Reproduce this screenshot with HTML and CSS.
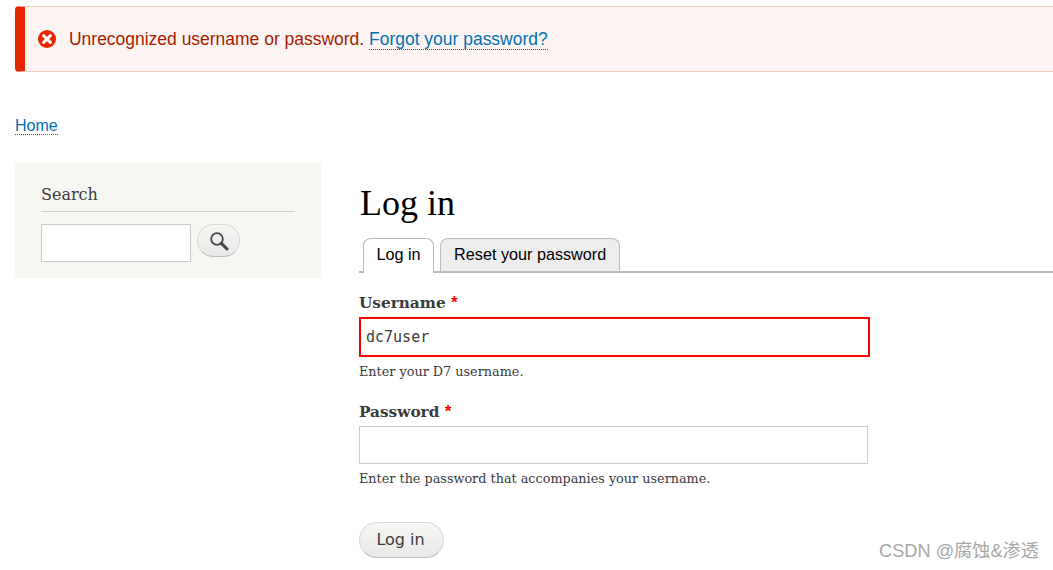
FILE: index.html
```html
<!DOCTYPE html>
<html lang="en">
<head>
  <meta charset="UTF-8" />
  <title>Log in</title>
  <link rel="stylesheet" href="styles.css">
</head>
<body>
<div class="message">
  <svg class="message-icon" viewBox="0 0 18 18" width="18" height="18">
    <circle cx="9" cy="9" r="9" fill="#e62600"/>
    <path d="M5.6 5.6 12.4 12.4M12.4 5.6 5.6 12.4" stroke="#fff" stroke-width="3" stroke-linecap="round"/>
  </svg>
  <span>Unrecognized username or password. <a href="#">Forgot your password?</a></span>
</div>

<div class="breadcrumb"><a href="#">Home</a></div>

<div class="layout">
  <aside class="sidebar">
    <h2>Search</h2>
    <div class="search-row">
      <input class="search-input" type="text">
      <button class="search-btn" type="button" aria-label="Search">
        <svg viewBox="0 0 20 20" width="20" height="20">
          <circle cx="8" cy="8" r="5.8" fill="none" stroke="#444" stroke-width="1.8"/>
          <path d="M12.4 12.4 18 18" stroke="#444" stroke-width="3" stroke-linecap="round"/>
        </svg>
      </button>
    </div>
  </aside>

  <main class="main">
    <h1>Log in</h1>
    <div class="tabs">
      <a class="tab active" href="#">Log in</a>
      <a class="tab" href="#">Reset your password</a>
    </div>
    <form class="login-form">
      <label>Username <span class="req">*</span></label>
      <input class="field field-error" type="text" value="dc7user">
      <p class="hint">Enter your D7 username.</p>

      <label class="second">Password <span class="req">*</span></label>
      <input class="field" type="password">
      <p class="hint">Enter the password that accompanies your username.</p>

      <button class="submit" type="button">Log in</button>
    </form>
  </main>
</div>

<div class="watermark">CSDN @腐蚀&amp;渗透</div>
</body>
</html>
```

FILE: styles.css
```css
html, body {
  margin: 0;
  padding: 0;
  height: 100%;
  overflow: hidden;
  background: #fff;
  color: #3b3b3b;
  font-family: "DejaVu Serif", serif;
}

a {
  color: #0071b3;
  text-decoration: none;
  border-bottom: 1px dotted #0071b3;
}

.message {
  box-sizing: border-box;
  display: flex;
  align-items: center;
  gap: 13px;
  height: 66px;
  margin: 6px -20px 0 15px;
  padding-left: 13px;
  background: #fcf4f2;
  border: 1px solid #f9c9bf;
  border-left: 10px solid #e62600;
  border-radius: 4px 0 0 4px;
  color: #a51b00;
  font-family: "Liberation Sans", Arial, sans-serif;
  font-size: 17.48px;
}

.message-icon {
  flex: none;
}

.breadcrumb {
  margin: 44px 0 0 15px;
  font-family: "Liberation Sans", Arial, sans-serif;
  font-size: 16px;
  line-height: 19px;
}

.layout {
  display: flex;
  align-items: flex-start;
  margin: 28px 0 0 15px;
}

.sidebar {
  box-sizing: border-box;
  flex: none;
  width: 306px;
  height: 115px;
  padding: 21px 26px 0;
  background: #f6f6f2;
}

.sidebar h2 {
  margin: 0;
  padding-bottom: 5px;
  border-bottom: 1px solid #d0d0cc;
  font-family: "DejaVu Serif", serif;
  font-size: 16px;
  line-height: 22px;
  font-weight: normal;
}

.search-row {
  display: flex;
  align-items: flex-start;
  gap: 6px;
  margin-top: 12px;
}

.search-input {
  box-sizing: border-box;
  width: 150px;
  height: 38px;
  padding: 0 6px;
  background: #fff;
  border: 1px solid #ccc;
}

.search-btn {
  display: flex;
  align-items: center;
  justify-content: center;
  width: 43px;
  height: 33px;
  padding: 0;
  border: 1px solid #d8d8d8;
  border-bottom-color: #bbb;
  border-radius: 17px;
  background: linear-gradient(#f6f6f3, #e8e8e8);
}

.main {
  flex: 1;
  margin-left: 38px;
}

.main h1 {
  margin: 20px 0 0 1px;
  color: #000;
  font-family: "Liberation Serif", serif;
  font-size: 36px;
  line-height: 40px;
  font-weight: normal;
}

.tabs {
  display: flex;
  gap: 6px;
  margin-top: 15px;
  padding-left: 4px;
  border-bottom: 2px solid #bbb;
  font-family: "Liberation Sans", Arial, sans-serif;
  font-size: 16.2px;
}

.tab {
  box-sizing: border-box;
  height: 33px;
  padding: 0 13px;
  line-height: 30px;
  color: #000;
  background: #ededed;
  border: 1px solid #bbb;
  border-bottom: 0;
  border-radius: 8px 8px 0 0;
}

.tab.active {
  height: 35px;
  margin-bottom: -2px;
  padding: 0 12.5px;
  background: #fff;
}

.login-form {
  padding-top: 21px;
}

.login-form label {
  display: block;
  font-size: 15.3px;
  line-height: 19px;
  font-weight: bold;
}

.login-form label.second {
  margin-top: 22px;
}

.req {
  color: #f00;
  font-family: "Liberation Sans", Arial, sans-serif;
  font-size: 17px;
  line-height: 0;
}

.field {
  box-sizing: border-box;
  display: block;
  width: 509px;
  height: 38px;
  margin-top: 4px;
  padding: 0 5px;
  background: #fff;
  border: 1px solid #ccc;
  color: #3b3b3b;
  font-family: "DejaVu Sans Mono", monospace;
  font-size: 15px;
}

.field-error {
  width: 511px;
  height: 40px;
  border: 2px solid #f00;
}

.hint {
  margin: 6px 0 0;
  font-size: 12.8px;
  line-height: 18px;
}

.submit {
  display: block;
  width: 85px;
  height: 36px;
  margin-top: 34px;
  padding: 0 2px 2px 0;
  border: 1px solid #d8d8d8;
  border-bottom-color: #bbb;
  border-radius: 18px;
  background: linear-gradient(#f6f6f3, #e8e8e8);
  color: #3b3b3b;
  font-family: "DejaVu Sans", sans-serif;
  font-size: 16px;
}

.watermark {
  position: absolute;
  right: 14px;
  bottom: 8px;
  color: #a8a8a8;
  font-family: "Liberation Sans", "Noto Sans CJK SC", sans-serif;
  font-size: 18.2px;
}
```
